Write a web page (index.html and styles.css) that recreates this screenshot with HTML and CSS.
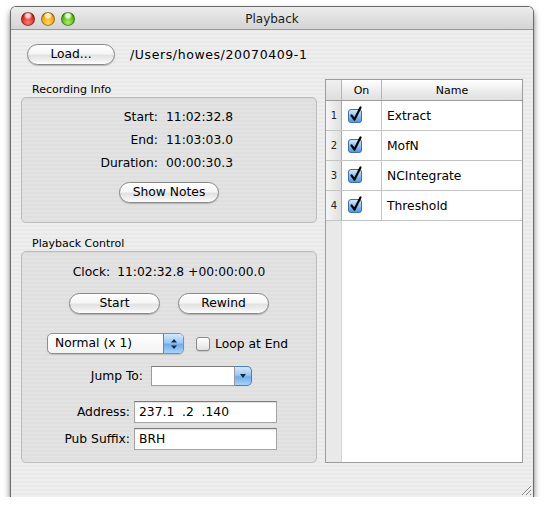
FILE: index.html
```html
<!DOCTYPE html>
<html>
<head>
<meta charset="utf-8">
<link rel="stylesheet" href="styles.css">
</head>
<body>
<div class="window">
  <div class="titlebar">
    <div class="lights">
      <span class="light red"></span>
      <span class="light yellow"></span>
      <span class="light green"></span>
    </div>
    <div class="title">Playback</div>
    <div></div>
  </div>
  <div class="content">
    <div class="loadrow">
      <button class="btn load">Load...</button>
      <span class="path">/Users/howes/20070409-1</span>
    </div>
    <div class="main">
      <div class="left">
        <div class="group-label">Recording Info</div>
        <div class="group rec">
          <div class="kv">
            <span class="k">Start:</span><span class="v">11:02:32.8</span>
            <span class="k">End:</span><span class="v">11:03:03.0</span>
            <span class="k">Duration:</span><span class="v">00:00:30.3</span>
          </div>
          <div class="center"><button class="btn notes">Show Notes</button></div>
        </div>
        <div class="group-label second">Playback Control</div>
        <div class="group ctl">
          <div class="clock"><span>Clock:</span><span>11:02:32.8 +00:00:00.0</span></div>
          <div class="btnrow">
            <button class="btn start">Start</button>
            <button class="btn rewind">Rewind</button>
          </div>
          <div class="poprow">
            <div class="popup">
              <span class="popup-text">Normal (x 1)</span>
              <span class="popup-arrows">
                <svg width="8" height="12" viewBox="0 0 8 12"><path d="M4 1 L7 4.5 H1 Z M4 11 L7 7.5 H1 Z" fill="#1a2a40"/></svg>
              </span>
            </div>
            <span class="check"></span>
            <span class="check-label">Loop at End</span>
          </div>
          <div class="formrow jump">
            <span class="flabel">Jump To:</span>
            <div class="combo">
              <span class="combo-field"></span>
              <span class="combo-btn"><svg width="8" height="6" viewBox="0 0 8 6"><path d="M1 1 H7 L4 5 Z" fill="#1a2a40"/></svg></span>
            </div>
          </div>
          <div class="formrow field addr">
            <span class="flabel">Address:</span>
            <span class="input">237.1  .2  .140</span>
          </div>
          <div class="formrow field pub">
            <span class="flabel">Pub Suffix:</span>
            <span class="input">BRH</span>
          </div>
        </div>
      </div>
      <div class="table">
        <div class="trow head">
          <div class="cell num"></div>
          <div class="cell on">On</div>
          <div class="cell name">Name</div>
        </div>
        <div class="trow">
          <div class="cell num">1</div>
          <div class="cell on"><svg class="tick" width="17" height="17" viewBox="0 0 17 17"><defs><linearGradient id="g1" x1="0" y1="0" x2="0" y2="1"><stop offset="0" stop-color="#d8ebfb"/><stop offset="0.5" stop-color="#8fc0ef"/><stop offset="1" stop-color="#4d93e0"/></linearGradient></defs><rect x="0.5" y="3.5" width="13" height="13" rx="2.5" fill="url(#g1)" stroke="#3d6fa8"/><path d="M3.5 9.5 L6.5 13.5 L12.5 1.5" fill="none" stroke="#000" stroke-width="2.2" stroke-linecap="round" stroke-linejoin="round"/></svg></div>
          <div class="cell name">Extract</div>
        </div>
        <div class="trow">
          <div class="cell num">2</div>
          <div class="cell on"><svg class="tick" width="17" height="17" viewBox="0 0 17 17"><rect x="0.5" y="3.5" width="13" height="13" rx="2.5" fill="url(#g1)" stroke="#3d6fa8"/><path d="M3.5 9.5 L6.5 13.5 L12.5 1.5" fill="none" stroke="#000" stroke-width="2.2" stroke-linecap="round" stroke-linejoin="round"/></svg></div>
          <div class="cell name">MofN</div>
        </div>
        <div class="trow">
          <div class="cell num">3</div>
          <div class="cell on"><svg class="tick" width="17" height="17" viewBox="0 0 17 17"><rect x="0.5" y="3.5" width="13" height="13" rx="2.5" fill="url(#g1)" stroke="#3d6fa8"/><path d="M3.5 9.5 L6.5 13.5 L12.5 1.5" fill="none" stroke="#000" stroke-width="2.2" stroke-linecap="round" stroke-linejoin="round"/></svg></div>
          <div class="cell name">NCIntegrate</div>
        </div>
        <div class="trow">
          <div class="cell num">4</div>
          <div class="cell on"><svg class="tick" width="17" height="17" viewBox="0 0 17 17"><rect x="0.5" y="3.5" width="13" height="13" rx="2.5" fill="url(#g1)" stroke="#3d6fa8"/><path d="M3.5 9.5 L6.5 13.5 L12.5 1.5" fill="none" stroke="#000" stroke-width="2.2" stroke-linecap="round" stroke-linejoin="round"/></svg></div>
          <div class="cell name">Threshold</div>
        </div>
        <div class="filler"></div>
      </div>
    </div>
  </div>
  <svg class="grip" width="12" height="12" viewBox="0 0 12 12">
    <path d="M11 2 L2 11 M11 6 L6 11 M11 10 L10 11" stroke="#8a8a8a" stroke-width="1"/>
    <path d="M11 3 L3 11 M11 7 L7 11" stroke="#fafafa" stroke-width="1"/>
  </svg>
</div>
</body>
</html>
```
FILE: styles.css
```css
* { box-sizing: border-box; margin: 0; padding: 0; }
html, body { background: #fff; }
body {
  font-family: "DejaVu Sans", sans-serif;
  font-size: 12.3px;
  color: #000;
  padding: 7px 0 0 11px;
}
button { font: inherit; color: inherit; }

.window {
  position: relative;
  width: 522px;
  height: 490px;
  border-radius: 5px 5px 0 0;
  background: repeating-linear-gradient(to bottom, #eeeeee 0 2px, #e9e9e9 2px 4px);
  box-shadow: 0 0 0 1px #6a6a6a, 0 4px 7px rgba(0,0,0,0.7);
}

.titlebar {
  height: 23px;
  display: grid;
  grid-template-columns: 1fr auto 1fr;
  align-items: center;
  border-bottom: 1px solid #9a9a9a;
  border-radius: 5px 5px 0 0;
  background: linear-gradient(#ececec, #d4d4d4);
}
.lights { display: flex; gap: 6px; padding-left: 10px; padding-top: 2px; }
.light {
  width: 14px; height: 14px; border-radius: 50%;
  box-shadow: inset 0 0 0 1px rgba(0,0,0,0.35);
}
.red { background: radial-gradient(circle at 50% 25%, #ffcccc 0 15%, transparent 35%), radial-gradient(circle at 50% 75%, #ff7a70, #d42a24 55%, #8c100c); }
.yellow { background: radial-gradient(circle at 50% 25%, #fff0c0 0 15%, transparent 35%), radial-gradient(circle at 50% 75%, #ffd860, #ee9e18 55%, #a86200); }
.green { background: radial-gradient(circle at 50% 25%, #e0ffc8 0 15%, transparent 35%), radial-gradient(circle at 50% 75%, #acee60, #54b41c 55%, #2a7006); }
.title { font-size: 12px; color: #1a1a1a; padding-top: 1px; }

.content { padding: 14px 10px 0 10px; }

.btn {
  height: 21px;
  border: 1px solid #888888;
  border-radius: 11px;
  background: linear-gradient(to bottom, #ffffff 0%, #f6f6f6 45%, #e2e2e2 55%, #f2f2f2 85%, #ffffff 100%);
  box-shadow: 0 1px 1px rgba(0,0,0,0.2);
  font-size: 12.3px;
  line-height: 19px;
  text-align: center;
}

.loadrow { display: flex; align-items: center; gap: 15px; padding-left: 6px; height: 21px; }
.load { width: 88px; }
.path { font-size: 12.5px; letter-spacing: 0.6px; }

.main { display: flex; gap: 8px; margin-top: 14px; }
.left { width: 296px; display: flex; flex-direction: column; }

.group-label { height: 18px; padding: 4px 0 0 11px; font-size: 11px; line-height: 13px; }
.group-label.second { height: 28px; padding-top: 14px; }

.group {
  border: 1px solid #bdbdbd;
  border-radius: 5px;
  background: repeating-linear-gradient(to bottom, #e3e3e3 0 2px, #dfdfdf 2px 4px);
  box-shadow: inset 0 1px 1px rgba(0,0,0,0.06);
}
.rec { padding: 8px 0 19px; }
.kv {
  display: grid;
  grid-template-columns: 136px auto;
  column-gap: 8px;
  line-height: 23px;
}
.k { text-align: right; }
.center { display: flex; justify-content: center; margin-top: 7px; }
.notes { width: 100px; }

.ctl { padding: 10px 0 12px; }
.clock { display: flex; justify-content: center; gap: 7px; line-height: 20px; }
.btnrow { display: flex; justify-content: center; gap: 18px; margin-top: 11px; }
.start { width: 91px; }
.rewind { width: 91px; }

.poprow { display: flex; align-items: center; margin-top: 19px; padding-left: 25px; height: 21px; }
.popup {
  width: 137px; height: 21px;
  display: flex;
  border: 1px solid #8d8d8d;
  border-radius: 5px;
  background: linear-gradient(#ffffff, #f3f3f3);
  box-shadow: 0 1px 1px rgba(0,0,0,0.15);
  overflow: hidden;
}
.popup-text { flex: 1; padding-left: 7px; line-height: 19px; }
.popup-arrows {
  width: 20px;
  display: flex; align-items: center; justify-content: center;
  border-left: 1px solid #5b87b8;
  background: linear-gradient(#d4e8fc 0%, #9cc8f2 45%, #6fadec 55%, #a8d2f8 100%);
}
.check {
  width: 14px; height: 14px; margin-left: 12px;
  border: 1px solid #8a8a8a; border-radius: 3px;
  background: linear-gradient(#ffffff, #e2e2e2);
  box-shadow: 0 1px 1px rgba(0,0,0,0.12);
}
.check-label { margin-left: 5px; }

.formrow { display: flex; align-items: center; }
.flabel { text-align: right; }
.jump { margin-top: 12px; height: 20px; }
.jump .flabel { width: 121px; margin-right: 8px; }
.combo { display: flex; height: 20px; }
.combo-field {
  width: 84px; height: 20px;
  background: #fff;
  border: 1px solid #9a9a9a; border-top-color: #7a7a7a;
}
.combo-btn {
  width: 17px; height: 20px;
  display: flex; align-items: center; justify-content: center;
  border: 1px solid #4f7fb4; border-left: none;
  border-radius: 0 5px 5px 0;
  background: linear-gradient(#d4e8fc 0%, #9cc8f2 45%, #6fadec 55%, #a8d2f8 100%);
}
.field { height: 22px; }
.addr { margin-top: 15px; }
.pub { margin-top: 5px; }
.field .flabel { width: 108px; margin-right: 4px; }
.input {
  width: 143px; height: 22px;
  background: #fff;
  border: 1px solid #a4a4a4; border-top-color: #7c7c7c;
  box-shadow: inset 0 1px 1px rgba(0,0,0,0.12);
  padding-left: 4px;
  line-height: 20px;
  white-space: pre;
}

.table {
  flex: 1;
  display: flex; flex-direction: column;
  border: 1px solid #9c9c9c;
  background: #fff;
}
.trow {
  display: grid;
  grid-template-columns: 16px 40px 1fr;
  height: 30px;
  border-bottom: 1px solid #c4c4c4;
}
.cell { border-right: 1px solid #c4c4c4; display: flex; align-items: center; }
.cell.name { border-right: none; padding-left: 5px; }
.cell.num {
  justify-content: flex-end;
  padding-right: 4px;
  font-size: 10px;
  color: #222;
  background: linear-gradient(to right, #f6f6f6, #e0e0e0);
  border-right: 1px solid #a8a8a8;
}
.cell.on { padding-left: 6px; padding-bottom: 2px; }
.trow.head { height: 21px; border-bottom: 1px solid #9c9c9c; font-size: 11px; }
.head .cell { background: linear-gradient(#ffffff, #ebebeb 60%, #e0e0e0); justify-content: center; border-right-color: #b4b4b4; }
.head .cell.name { padding-left: 0; }
.head .cell.on { padding: 0; }
.head .cell.num { background: linear-gradient(#f0f0f0, #dedede); }
.filler {
  flex: 1;
  background: linear-gradient(to right, #e9e9e9 0 15px, #d2d2d2 15px 16px, #ffffff 16px);
}

.grip { position: absolute; right: 1px; bottom: 1px; }
```
